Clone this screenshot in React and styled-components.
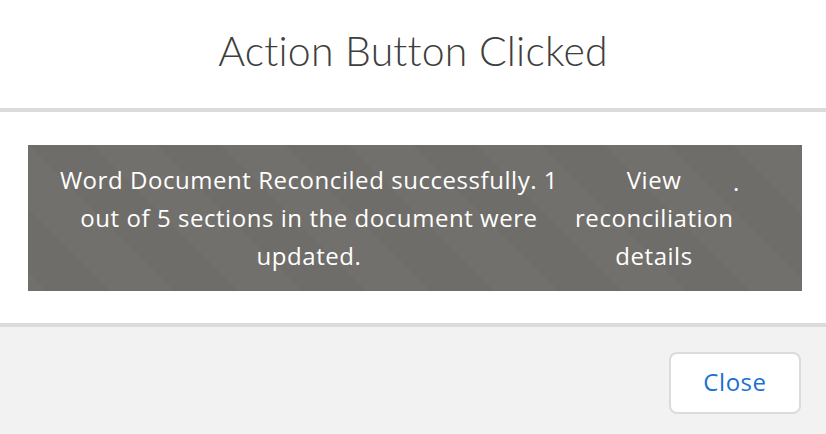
import React from "react";
import styled, { createGlobalStyle } from "styled-components";

const Global = createGlobalStyle`
  html, body { margin: 0; padding: 0; background: #ffffff; }
  body { font-family: "Open Sans", "Noto Sans", sans-serif; }
  * { box-sizing: border-box; }
`;

const Modal = styled.div`
  width: 826px;
  height: 434px;
  display: flex;
  flex-direction: column;
  background: #ffffff;
`;

const Header = styled.header`
  height: 112px;
  display: flex;
  align-items: center;
  justify-content: center;
  border-bottom: 4px solid #dddbda;
  padding-bottom: 8px;
`;

const Title = styled.h2`
  margin: 0;
  font-family: "Lato", "Noto Sans", sans-serif;
  font-weight: 300;
  font-size: 41px;
  color: #3e3e3c;
  letter-spacing: 0.2px;
`;

const Body = styled.div`
  padding: 33px 24px 32px 28px;
  display: flex;
`;

const Toast = styled.div`
  width: 774px;
  height: 146px;
  display: flex;
  align-items: center;
  justify-content: flex-start;
  padding-left: 26px;
  color: #ffffff;
  background-color: #72706c;
  background-image: linear-gradient(
    45deg,
    rgba(0, 0, 0, 0.025) 25%,
    transparent 25%,
    transparent 50%,
    rgba(0, 0, 0, 0.025) 50%,
    rgba(0, 0, 0, 0.025) 75%,
    transparent 75%,
    transparent
  );
  background-size: 128px 128px;
  font-size: 24px;
  letter-spacing: 0.55px;
  line-height: 38px;
  font-weight: 400;
`;

const Message = styled.span`
  width: 510px;
  text-align: center;
  flex: none;
`;

const Link = styled.a`
  color: #ffffff;
  width: 158px;
  margin-left: 11px;
  text-align: center;
  text-decoration: none;
  flex: none;
`;

const Dot = styled.span`
  align-self: flex-start;
  margin-top: 18px;
  margin-left: 0;
`;

const Footer = styled.footer`
  flex: 1;
  background: #f3f2f2;
  border-top: 4px solid #dddbda;
  display: flex;
  justify-content: flex-end;
  align-items: flex-start;
  padding: 25px 25px 0 0;
`;

const Button = styled.button`
  width: 132px;
  height: 62px;
  padding: 0 0 4px;
  background: #ffffff;
  border: 2px solid #dddbda;
  border-radius: 8px;
  color: #1b6fd6;
  font-family: "Open Sans", "Noto Sans", sans-serif;
  font-size: 24px;
  letter-spacing: 0.55px;
  cursor: pointer;
`;

export default function App() {
  return (
    <>
      <Global />
      <Modal>
        <Header>
          <Title>Action Button Clicked</Title>
        </Header>
        <Body>
          <Toast>
            <Message>
              Word Document Reconciled successfully. 1 out of 5 sections in the
              document were updated.
            </Message>
            <Link href="#">View reconciliation details</Link>
            <Dot>.</Dot>
          </Toast>
        </Body>
        <Footer>
          <Button>Close</Button>
        </Footer>
      </Modal>
    </>
  );
}
